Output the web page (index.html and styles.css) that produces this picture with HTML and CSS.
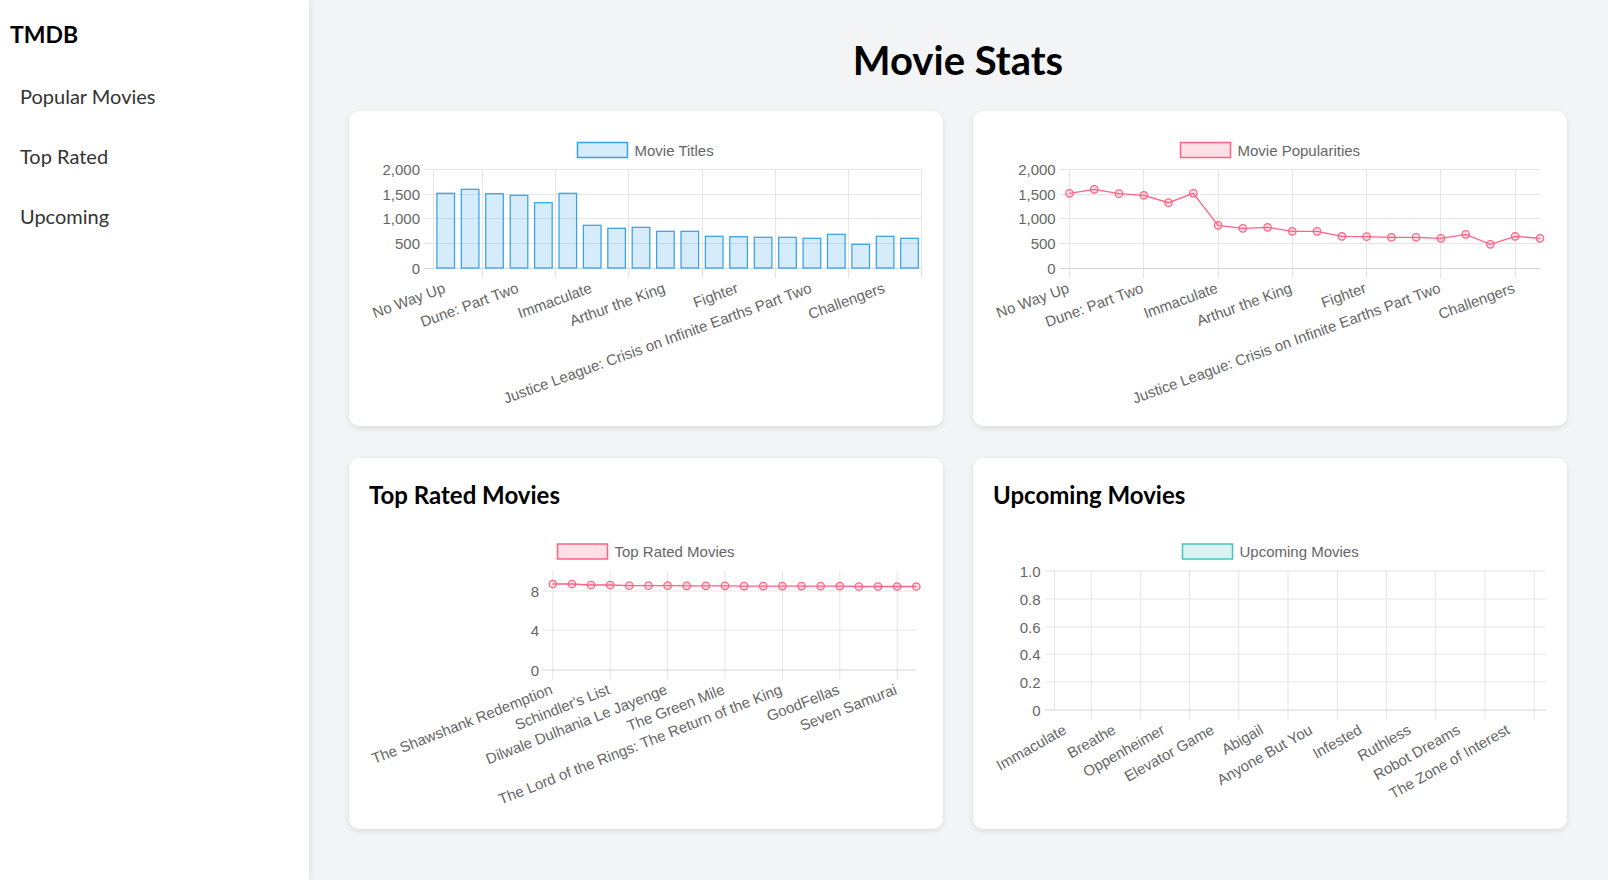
FILE: index.html
```html
<!DOCTYPE html>
<html lang="en">
<head>
<meta charset="utf-8">
<title>TMDB - Movie Stats</title>
<link rel="stylesheet" href="styles.css">
</head>
<body>
<aside class="sidebar">
  <div class="brand">TMDB</div>
  <ul class="nav">
    <li class="nav-item">Popular Movies</li>
    <li class="nav-item">Top Rated</li>
    <li class="nav-item">Upcoming</li>
  </ul>
</aside>
<main class="main">
  <h1 class="page-title">Movie Stats</h1>
  <div class="grid">
    <section class="card">
      <svg class="chart" width="554" height="275" viewBox="369 132 554 275">
        <rect x="577.5" y="143.5" width="50" height="15" class="lg-blue"/>
        <text x="634.5" y="151.5" class="lg">Movie Titles</text>
        <g class="grid-lines">
          <line x1="423.5" x2="921.7" y1="170.5" y2="170.5"/>
          <line x1="423.5" x2="921.7" y1="195.5" y2="195.5"/>
          <line x1="423.5" x2="921.7" y1="219.5" y2="219.5"/>
          <line x1="423.5" x2="921.7" y1="244.5" y2="244.5"/>
          <line x1="482.5" x2="482.5" y1="170" y2="279"/>
          <line x1="555.5" x2="555.5" y1="170" y2="279"/>
          <line x1="628.5" x2="628.5" y1="170" y2="279"/>
          <line x1="702.5" x2="702.5" y1="170" y2="279"/>
          <line x1="775.5" x2="775.5" y1="170" y2="279"/>
          <line x1="848.5" x2="848.5" y1="170" y2="279"/>
          <line x1="921.5" x2="921.5" y1="170" y2="279"/>
          <line x1="433.5" x2="433.5" y1="170" y2="269"/>
        </g>
        <line class="axis" x1="423.5" x2="921.7" y1="269.5" y2="269.5"/>
        <g class="ylab">
          <text x="420" y="170.5">2,000</text>
          <text x="420" y="195.5">1,500</text>
          <text x="420" y="219.5">1,000</text>
          <text x="420" y="244.5">500</text>
          <text x="420" y="269.5">0</text>
        </g>
        <g class="bars">
          <rect x="436.9" y="194.3" width="17.6" height="74.7"/>
          <rect x="461.3" y="190.3" width="17.6" height="78.7"/>
          <rect x="485.7" y="194.7" width="17.6" height="74.3"/>
          <rect x="510.2" y="196.3" width="17.6" height="72.7"/>
          <rect x="534.6" y="203.7" width="17.6" height="65.3"/>
          <rect x="559.0" y="194.3" width="17.6" height="74.7"/>
          <rect x="583.4" y="226.3" width="17.6" height="42.7"/>
          <rect x="607.8" y="229.3" width="17.6" height="39.7"/>
          <rect x="632.2" y="228.3" width="17.6" height="40.7"/>
          <rect x="656.6" y="232.3" width="17.6" height="36.7"/>
          <rect x="681.0" y="232.3" width="17.6" height="36.7"/>
          <rect x="705.4" y="237.3" width="17.6" height="31.7"/>
          <rect x="729.8" y="237.7" width="17.6" height="31.3"/>
          <rect x="754.3" y="238.3" width="17.6" height="30.7"/>
          <rect x="778.7" y="238.3" width="17.6" height="30.7"/>
          <rect x="803.1" y="239.3" width="17.6" height="29.7"/>
          <rect x="827.5" y="235.3" width="17.6" height="33.7"/>
          <rect x="851.9" y="245.3" width="17.6" height="23.7"/>
          <rect x="876.3" y="237.3" width="17.6" height="31.7"/>
          <rect x="900.7" y="239.3" width="17.6" height="29.7"/>
        </g>
        <g class="xlab">
          <text transform="translate(442.6 282.75) rotate(-20)" y="5.5">No Way Up</text>
          <text transform="translate(515.8 282.75) rotate(-20)" y="5.5">Dune: Part Two</text>
          <text transform="translate(589.1 282.75) rotate(-20)" y="5.5">Immaculate</text>
          <text transform="translate(662.3 282.75) rotate(-20)" y="5.5">Arthur the King</text>
          <text transform="translate(735.5 282.75) rotate(-20)" y="5.5">Fighter</text>
          <text transform="translate(808.8 282.75) rotate(-20)" y="5.5">Justice League: Crisis on Infinite Earths Part Two</text>
          <text transform="translate(882.0 282.75) rotate(-20)" y="5.5">Challengers</text>
        </g>
      </svg>
    </section>

    <section class="card">
      <svg class="chart" width="554" height="275" viewBox="993 132 554 275">
        <rect x="1180.5" y="143.5" width="50" height="15" class="lg-pink"/>
        <text x="1237.5" y="151.5" class="lg">Movie Popularities</text>
        <g class="grid-lines">
          <line x1="1059.5" x2="1540" y1="170.5" y2="170.5"/>
          <line x1="1059.5" x2="1540" y1="195.5" y2="195.5"/>
          <line x1="1059.5" x2="1540" y1="219.5" y2="219.5"/>
          <line x1="1059.5" x2="1540" y1="244.5" y2="244.5"/>
          <line x1="1069.5" x2="1069.5" y1="170" y2="279"/>
          <line x1="1143.5" x2="1143.5" y1="170" y2="279"/>
          <line x1="1218.5" x2="1218.5" y1="170" y2="279"/>
          <line x1="1292.5" x2="1292.5" y1="170" y2="279"/>
          <line x1="1366.5" x2="1366.5" y1="170" y2="279"/>
          <line x1="1440.5" x2="1440.5" y1="170" y2="279"/>
          <line x1="1515.5" x2="1515.5" y1="170" y2="279"/>
        </g>
        <line class="axis" x1="1059.5" x2="1540" y1="269.5" y2="269.5"/>
        <g class="ylab">
          <text x="1055.7" y="170.5">2,000</text>
          <text x="1055.7" y="195.5">1,500</text>
          <text x="1055.7" y="219.5">1,000</text>
          <text x="1055.7" y="244.5">500</text>
          <text x="1055.7" y="269.5">0</text>
        </g>
        <polyline class="line-pink" points="1069.5,194.3 1094.3,190.3 1119.0,194.7 1143.8,196.3 1168.5,203.7 1193.3,194.3 1218.1,226.3 1242.8,229.3 1267.6,228.3 1292.3,232.3 1317.1,232.3 1341.9,237.3 1366.6,237.7 1391.4,238.3 1416.1,238.3 1440.9,239.3 1465.7,235.3 1490.4,245.3 1515.2,237.3 1540.0,239.3"/>
        <g class="pts-pink">
          <circle cx="1069.5" cy="194.3" r="3.75"/><circle cx="1094.3" cy="190.3" r="3.75"/>
          <circle cx="1119.0" cy="194.7" r="3.75"/><circle cx="1143.8" cy="196.3" r="3.75"/>
          <circle cx="1168.5" cy="203.7" r="3.75"/><circle cx="1193.3" cy="194.3" r="3.75"/>
          <circle cx="1218.1" cy="226.3" r="3.75"/><circle cx="1242.8" cy="229.3" r="3.75"/>
          <circle cx="1267.6" cy="228.3" r="3.75"/><circle cx="1292.3" cy="232.3" r="3.75"/>
          <circle cx="1317.1" cy="232.3" r="3.75"/><circle cx="1341.9" cy="237.3" r="3.75"/>
          <circle cx="1366.6" cy="237.7" r="3.75"/><circle cx="1391.4" cy="238.3" r="3.75"/>
          <circle cx="1416.1" cy="238.3" r="3.75"/><circle cx="1440.9" cy="239.3" r="3.75"/>
          <circle cx="1465.7" cy="235.3" r="3.75"/><circle cx="1490.4" cy="245.3" r="3.75"/>
          <circle cx="1515.2" cy="237.3" r="3.75"/><circle cx="1540.0" cy="239.3" r="3.75"/>
        </g>
        <g class="xlab">
          <text transform="translate(1066.4 282.75) rotate(-20)" y="5.5">No Way Up</text>
          <text transform="translate(1140.7 282.75) rotate(-20)" y="5.5">Dune: Part Two</text>
          <text transform="translate(1215.0 282.75) rotate(-20)" y="5.5">Immaculate</text>
          <text transform="translate(1289.2 282.75) rotate(-20)" y="5.5">Arthur the King</text>
          <text transform="translate(1363.5 282.75) rotate(-20)" y="5.5">Fighter</text>
          <text transform="translate(1437.8 282.75) rotate(-20)" y="5.5">Justice League: Crisis on Infinite Earths Part Two</text>
          <text transform="translate(1512.1 282.75) rotate(-20)" y="5.5">Challengers</text>
        </g>
      </svg>
    </section>

    <section class="card">
      <h2 class="card-title">Top Rated Movies</h2>
      <svg class="chart" width="554" height="300" viewBox="369 509.5 554 300">
        <rect x="557.5" y="544.5" width="50" height="15" class="lg-pink"/>
        <text x="614.5" y="552" class="lg">Top Rated Movies</text>
        <g class="grid-lines">
          <line x1="542" x2="916.3" y1="591.5" y2="591.5"/>
          <line x1="542" x2="916.3" y1="630.5" y2="630.5"/>
          <line x1="552.8" x2="552.8" y1="571.7" y2="680"/>
          <line x1="610.2" x2="610.2" y1="571.7" y2="680"/>
          <line x1="667.6" x2="667.6" y1="571.7" y2="680"/>
          <line x1="725.0" x2="725.0" y1="571.7" y2="680"/>
          <line x1="782.4" x2="782.4" y1="571.7" y2="680"/>
          <line x1="839.8" x2="839.8" y1="571.7" y2="680"/>
          <line x1="897.1" x2="897.1" y1="571.7" y2="680"/>
        </g>
        <line class="axis" x1="542" x2="916.3" y1="670.5" y2="670.5"/>
        <g class="ylab">
          <text x="539" y="591.5">8</text>
          <text x="539" y="630.5">4</text>
          <text x="539" y="670.5">0</text>
        </g>
        <polyline class="line-pink" points="552.8,584.5 571.9,584.5 591.1,585.5 610.2,585.5 629.3,586.2 648.5,586.2 667.6,586.2 686.7,586.3 705.8,586.3 725.0,586.3 744.1,586.6 763.2,586.6 782.4,586.6 801.5,586.6 820.6,586.6 839.8,586.6 858.9,587 878.0,587 897.1,587 916.3,587"/>
        <g class="pts-pink">
          <circle cx="552.8" cy="584.5" r="3.75"/><circle cx="571.9" cy="584.5" r="3.75"/>
          <circle cx="591.1" cy="585.5" r="3.75"/><circle cx="610.2" cy="585.5" r="3.75"/>
          <circle cx="629.3" cy="586.2" r="3.75"/><circle cx="648.5" cy="586.2" r="3.75"/>
          <circle cx="667.6" cy="586.2" r="3.75"/><circle cx="686.7" cy="586.3" r="3.75"/>
          <circle cx="705.8" cy="586.3" r="3.75"/><circle cx="725.0" cy="586.3" r="3.75"/>
          <circle cx="744.1" cy="586.6" r="3.75"/><circle cx="763.2" cy="586.6" r="3.75"/>
          <circle cx="782.4" cy="586.6" r="3.75"/><circle cx="801.5" cy="586.6" r="3.75"/>
          <circle cx="820.6" cy="586.6" r="3.75"/><circle cx="839.8" cy="586.6" r="3.75"/>
          <circle cx="858.9" cy="587" r="3.75"/><circle cx="878.0" cy="587" r="3.75"/>
          <circle cx="897.1" cy="587" r="3.75"/><circle cx="916.3" cy="587" r="3.75"/>
        </g>
        <g class="xlab">
          <text transform="translate(549.5 683.75) rotate(-21.5)" y="5.5">The Shawshank Redemption</text>
          <text transform="translate(606.9 683.75) rotate(-21.5)" y="5.5">Schindler's List</text>
          <text transform="translate(664.3 683.75) rotate(-21.5)" y="5.5">Dilwale Dulhania Le Jayenge</text>
          <text transform="translate(721.7 683.75) rotate(-21.5)" y="5.5">The Green Mile</text>
          <text transform="translate(779.1 683.75) rotate(-21.5)" y="5.5">The Lord of the Rings: The Return of the King</text>
          <text transform="translate(836.5 683.75) rotate(-21.5)" y="5.5">GoodFellas</text>
          <text transform="translate(893.8 683.75) rotate(-21.5)" y="5.5">Seven Samurai</text>
        </g>
      </svg>
    </section>

    <section class="card">
      <h2 class="card-title">Upcoming Movies</h2>
      <svg class="chart" width="554" height="300" viewBox="993 509.5 554 300">
        <rect x="1182.5" y="544.5" width="50" height="15" class="lg-teal"/>
        <text x="1239.5" y="552" class="lg">Upcoming Movies</text>
        <g class="grid-lines">
          <line x1="1044.5" x2="1546.2" y1="571.5" y2="571.5"/>
          <line x1="1044.5" x2="1546.2" y1="599.5" y2="599.5"/>
          <line x1="1044.5" x2="1546.2" y1="627.5" y2="627.5"/>
          <line x1="1044.5" x2="1546.2" y1="654.5" y2="654.5"/>
          <line x1="1044.5" x2="1546.2" y1="682.5" y2="682.5"/>
          <line x1="1054.5" x2="1054.5" y1="571" y2="710"/>
          <line x1="1091.1" x2="1091.1" y1="571" y2="720"/>
          <line x1="1140.3" x2="1140.3" y1="571" y2="720"/>
          <line x1="1189.6" x2="1189.6" y1="571" y2="720"/>
          <line x1="1238.8" x2="1238.8" y1="571" y2="720"/>
          <line x1="1288.0" x2="1288.0" y1="571" y2="720"/>
          <line x1="1337.3" x2="1337.3" y1="571" y2="720"/>
          <line x1="1386.5" x2="1386.5" y1="571" y2="720"/>
          <line x1="1435.7" x2="1435.7" y1="571" y2="720"/>
          <line x1="1485.0" x2="1485.0" y1="571" y2="720"/>
          <line x1="1534.2" x2="1534.2" y1="571" y2="720"/>
        </g>
        <line class="axis" x1="1044.5" x2="1546.2" y1="710.5" y2="710.5"/>
        <g class="ylab">
          <text x="1040.5" y="571.5">1.0</text>
          <text x="1040.5" y="599.5">0.8</text>
          <text x="1040.5" y="627.5">0.6</text>
          <text x="1040.5" y="654.5">0.4</text>
          <text x="1040.5" y="682.5">0.2</text>
          <text x="1040.5" y="710.5">0</text>
        </g>
        <g class="xlab">
          <text transform="translate(1062.1 723.75) rotate(-29.5)" y="5.5">Immaculate</text>
          <text transform="translate(1111.3 723.75) rotate(-29.5)" y="5.5">Breathe</text>
          <text transform="translate(1160.5 723.75) rotate(-29.5)" y="5.5">Oppenheimer</text>
          <text transform="translate(1209.8 723.75) rotate(-29.5)" y="5.5">Elevator Game</text>
          <text transform="translate(1259.0 723.75) rotate(-29.5)" y="5.5">Abigail</text>
          <text transform="translate(1308.2 723.75) rotate(-29.5)" y="5.5">Anyone But You</text>
          <text transform="translate(1357.5 723.75) rotate(-29.5)" y="5.5">Infested</text>
          <text transform="translate(1406.7 723.75) rotate(-29.5)" y="5.5">Ruthless</text>
          <text transform="translate(1455.9 723.75) rotate(-29.5)" y="5.5">Robot Dreams</text>
          <text transform="translate(1505.2 723.75) rotate(-29.5)" y="5.5">The Zone of Interest</text>
        </g>
      </svg>
    </section>
  </div>
</main>
</body>
</html>
```
FILE: styles.css
```css
* {
  box-sizing: border-box;
}

html,
body {
  margin: 0;
  height: 100%;
}

body {
  display: flex;
  font-family: Lato, "Open Sans", sans-serif;
  background: #f3f4f6;
  color: #000;
  overflow: hidden;
}

.sidebar {
  flex: none;
  width: 309px;
  background: #fff;
  padding: 18px 10px;
  box-shadow: 2px 0 6px rgba(0, 0, 0, 0.07);
  position: relative;
  z-index: 1;
}

.brand {
  font-size: 23px;
  font-weight: 700;
  line-height: 32px;
  margin: 0 0 16px;
}

.nav {
  list-style: none;
  margin: 0;
  padding: 0;
}

.nav-item {
  font-size: 20px;
  line-height: 60px;
  padding-left: 10px;
  color: #333;
}

.main {
  flex: 1;
  padding: 0 41px 0 40px;
}

.page-title {
  font-size: 40px;
  font-weight: 700;
  line-height: 54px;
  text-align: center;
  margin: 33px 0 24px;
}

.grid {
  display: grid;
  grid-template-columns: 1fr 1fr;
  column-gap: 30px;
  row-gap: 32px;
}

.card {
  background: #fff;
  border-radius: 10px;
  box-shadow: 0 2px 6px rgba(0, 0, 0, 0.1);
  padding: 20px;
}

.card-title {
  font-size: 24px;
  font-weight: 700;
  line-height: 28px;
  margin: 3px 0 0;
}

.chart {
  display: block;
  overflow: visible;
}

.chart text {
  font-family: "Liberation Sans", Arial, sans-serif;
  font-size: 15px;
  fill: #666;
  dominant-baseline: central;
}

.chart .ylab text,
.chart .xlab text {
  text-anchor: end;
}

.grid-lines line {
  stroke: #e5e5e5;
  stroke-width: 1;
}

.axis {
  stroke: #d4d4d4;
  stroke-width: 1;
}

.lg-blue {
  fill: rgba(54, 162, 235, 0.2);
  stroke: rgb(54, 162, 235);
  stroke-width: 1.5;
}

.lg-pink {
  fill: rgba(255, 99, 132, 0.2);
  stroke: rgb(255, 99, 132);
  stroke-width: 1.5;
}

.lg-teal {
  fill: rgba(75, 192, 192, 0.2);
  stroke: rgb(75, 192, 192);
  stroke-width: 1.5;
}

.bars rect {
  fill: rgba(54, 162, 235, 0.2);
  stroke: rgb(54, 162, 235);
  stroke-width: 1.25;
}

.line-pink {
  fill: none;
  stroke: rgb(255, 99, 132);
  stroke-width: 1.3;
}

.pts-pink circle {
  fill: rgba(255, 99, 132, 0.2);
  stroke: rgb(255, 99, 132);
  stroke-width: 1.25;
}
```
